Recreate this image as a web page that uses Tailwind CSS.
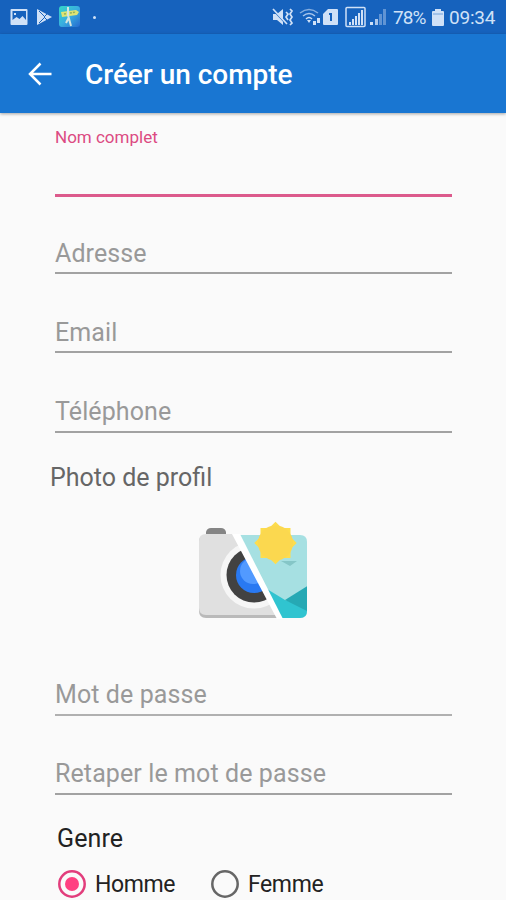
<!DOCTYPE html>
<html lang="fr">
<head>
    <meta charset="UTF-8">
    <meta name="viewport" content="width=device-width, initial-scale=1.0">
    <title>Créer un compte</title>
    <script src="https://cdn.jsdelivr.net/npm/@tailwindcss/browser@4"></script>
</head>
<body class="h-screen overflow-hidden bg-[#fafafa] font-['Roboto',sans-serif]">

    <!-- Status bar -->
    <div class="flex h-[34px] items-center bg-[#1662bd] pl-[10px] text-[#d0e1f7]">
        <svg class="h-[18px] w-[18px] shrink-0" viewBox="0 0 18 18">
            <path fill="currentColor" fill-rule="evenodd" d="M1.500 1h15q1 0 1 1v14q0 1-1 1h-15q-1 0-1-1V2q0-1 1-1zM2.500 3v9l4-3 3 2 3-3 3.500 4V3zM4 5h2v2H4z"/>
        </svg>
        <svg class="ml-2 h-[18px] w-[17px] shrink-0" viewBox="0 0 17 18">
            <path fill="currentColor" d="M1 1l15 8-15 8z"/>
            <path stroke="#1662bd" fill="none" d="M3 3l6 6-6 6M8 9l3-3M8 9l3 3"/>
        </svg>
        <svg class="ml-[6px] h-[22px] w-[22px] shrink-0" viewBox="0 0 22 22">
            <defs>
                <linearGradient id="appIcon" x2="1" y2="1">
                    <stop offset="0" stop-color="#35d7c6"/>
                    <stop offset=".5" stop-color="#39aee0"/>
                    <stop offset="1" stop-color="#2569cf"/>
                </linearGradient>
            </defs>
            <rect width="21" height="21" rx="3" fill="url(#appIcon)"/>
            <path fill="#dfe473" d="M2 6l15-2 3 2-2 3L3 11z"/>
            <path stroke="#8fb060" stroke-dasharray="2 1" stroke-width="1.500" d="M5 8l12-2"/>
            <path stroke="#d5e6df" stroke-width="2" fill="none" d="M9 1v8l3 11M10 11l-3 6"/>
        </svg>
        <span class="ml-[12px] h-[3px] w-[3px] shrink-0 rounded-full bg-current"></span>
        <svg class="ml-[176px] h-5 w-[21px] shrink-0" viewBox="0 0 21 20">
            <path fill="currentColor" d="M1 7h4l6-5v16l-6-5H1z"/>
            <path stroke="#1662bd" stroke-width="1.200" d="M1 3l14 15"/>
            <path stroke="currentColor" stroke-width="1.700" fill="none" d="M1 2l14 15M14 5l2 2-2 3 2 3M18 2l2 2-2 3 2 3-2 3 2 3-2 2"/>
        </svg>
        <svg class="ml-[6px] h-5 w-[23px] shrink-0" viewBox="0 0 23 20">
            <g fill="none" stroke="currentColor" stroke-width="1.500">
                <path opacity=".6" d="M1 6q9-7 18 0"/>
                <path opacity=".8" d="M4 9q6-5 12 0"/>
                <path d="M7 12q3-3 6 0"/>
            </g>
            <path fill="currentColor" d="M8 13h4l-2 3zM14 14h3v4h-3zM18 11h3v5h-3z"/>
        </svg>
        <svg class="ml-[1px] h-[18px] w-4 shrink-0" viewBox="0 0 16 18">
            <path fill="currentColor" d="M5 1h9q1 0 1 1v14q0 1-1 1H1q-1 0-1-1V6z"/>
            <path fill="none" stroke="#1662bd" stroke-width="2" d="M6 6h2v7"/>
        </svg>
        <svg class="ml-[6px] h-[22px] w-[21px] shrink-0" viewBox="0 0 21 22">
            <rect x="1" y="1.500" width="19" height="19" rx="1" fill="none" stroke="currentColor" stroke-width="1.500"/>
            <path fill="currentColor" d="M4 16h2v3H4zM7 13h2v6H7zM10 10h2v9h-2zM13 7h2v12h-2zM16 4h2v15h-2z"/>
        </svg>
        <svg class="ml-[4px] h-[18px] w-[17px] shrink-0" viewBox="0 0 17 18">
            <path fill="currentColor" d="M0 14h3v3H0z"/>
            <path fill="currentColor" opacity=".8" d="M5 11h3v6H5z"/>
            <path fill="currentColor" opacity=".4" d="M9 6h3v11H9zM13 1h3v16h-3z"/>
        </svg>
        <span class="ml-[6px] mt-[2px] w-[38px] shrink-0 whitespace-nowrap text-[19px] tracking-[-0.9px]">78%</span>
        <svg class="h-[19px] w-[14px] shrink-0" viewBox="0 0 14 19">
            <path fill="currentColor" d="M4 1h6v2h2q1 0 1 1v13q0 1-1 1H2q-1 0-1-1V4q0-1 1-1h2z"/>
            <path stroke="#72a2da" d="M2 6h10"/>
        </svg>
        <span class="ml-[4px] mt-[2px] shrink-0 whitespace-nowrap text-[19px] tracking-[-0.2px]">09:34</span>
    </div>

    <!-- App bar -->
    <header class="relative flex h-[79px] items-center bg-[#1976d2] pl-7 text-white shadow-[0_1px_3px_rgba(0,0,0,0.35)]">
        <svg class="h-6 w-6" viewBox="0 0 24 24" fill="none" stroke="currentColor" stroke-width="2.500">
            <path d="M12.500 1.500L2 12l10.500 10.500M2 12h21.500"/>
        </svg>
        <h1 class="ml-[33px] mt-[3px] text-[28px] font-medium tracking-[-0.02px]">Créer un compte</h1>
    </header>

    <form class="pl-[55px] pr-[54px] text-[25px] leading-[30px] tracking-[0.1px] text-[#999]">
        <label class="flex h-[84px] flex-col border-b-3 border-[#dc5a8c] pt-[14px] text-[17px] leading-5 tracking-normal text-[#dc4a82]">Nom complet</label>
        <label class="flex h-[77px] items-end border-b-2 border-[#a2a2a2] pb-[3px]">Adresse</label>
        <label class="flex h-[79px] items-end border-b-2 border-[#a2a2a2] pb-[3px]">Email</label>
        <label class="flex h-[80px] items-end border-b-2 border-[#a2a2a2] pb-[4px]">Téléphone</label>

        <p class="-ml-[5px] mt-[30px] tracking-normal text-[#666]">Photo de profil</p>
        <div class="-ml-[2px] mt-[24px] flex h-[104px] justify-center">
            <svg class="h-[104px] w-[112px]" viewBox="0 0 112 104">
                <defs>
                    <clipPath id="cameraHalf"><path d="M0 0H32L88 104H0z"/></clipPath>
                    <clipPath id="photoCard"><path d="M42 18h61q7 0 7 7v69q0 7-7 7H82z"/></clipPath>
                </defs>
                <g clip-path="url(#cameraHalf)">
                    <path fill="#858585" d="M9 18v-3q1-4 5-4h10q4 0 5 4v3z"/>
                    <path fill="#bababa" d="M9 18h31l44 83H9q-7 0-7-7V25q0-7 7-7z"/>
                    <path fill="#e0e0e0" d="M9 17h31l44 81H9q-7 0-7-7V24q0-7 7-7z"/>
                    <circle cx="57" cy="58" r="33.500" fill="#f6f6f6"/>
                    <circle cx="57" cy="58" r="27.500" fill="#424242"/>
                    <circle cx="57" cy="58" r="18" fill="#2979f2"/>
                    <circle cx="56" cy="54" r="13" fill="#529aff"/>
                </g>
                <g clip-path="url(#photoCard)">
                    <path fill="#a6e0e2" d="M40 15h72v87H40z"/>
                    <path fill="#30c4d0" d="M70 72l18 11 24 8v12H80z"/>
                    <path fill="#26a9b4" d="M88 83l24-15v27z"/>
                </g>
                <!-- diagonal split -->
                <path fill="#fff" d="M35 17h8l43 85h-6z"/>
                <path fill="#85c6c7" d="M84 44h16l-7 5z"/>
                <!-- sun: two squares, 45 degrees apart -->
                <g fill="#fddd4d">
                    <rect x="63.500" y="11" width="30" height="30"/>
                    <rect x="63.500" y="11" width="30" height="30" transform="rotate(45 78.500 26)"/>
                    <circle cx="78.500" cy="26" r="17.500" fill="#fbd84f"/>
                </g>
            </svg>
        </div>

        <label class="flex h-[95px] items-end border-b-2 border-[#b0b0b0] pb-[4px]">Mot de passe</label>
        <label class="flex h-[79px] items-end border-b-2 border-[#a2a2a2] pb-[4px]">Retaper le mot de passe</label>

        <p class="ml-[2px] mt-7 pt-px text-[#222]">Genre</p>
        <div class="ml-[3px] mt-[15px] flex items-center text-[23px] tracking-[-0.4px] text-[#222]">
            <svg class="h-7 w-7" viewBox="0 0 28 28">
                <circle cx="14" cy="14" r="12.700" fill="none" stroke="#e23d7c" stroke-width="2.500"/>
                <circle cx="14" cy="14" r="7" fill="#ff4081"/>
            </svg>
            <span class="ml-[9px] w-[116px] pt-[2px] leading-7">Homme</span>
            <svg class="h-7 w-7" viewBox="0 0 28 28">
                <circle cx="14" cy="14" r="12.700" fill="none" stroke="#666" stroke-width="2.500"/>
            </svg>
            <span class="ml-[9px] pt-[2px] leading-7">Femme</span>
        </div>
    </form>

</body>
</html>
